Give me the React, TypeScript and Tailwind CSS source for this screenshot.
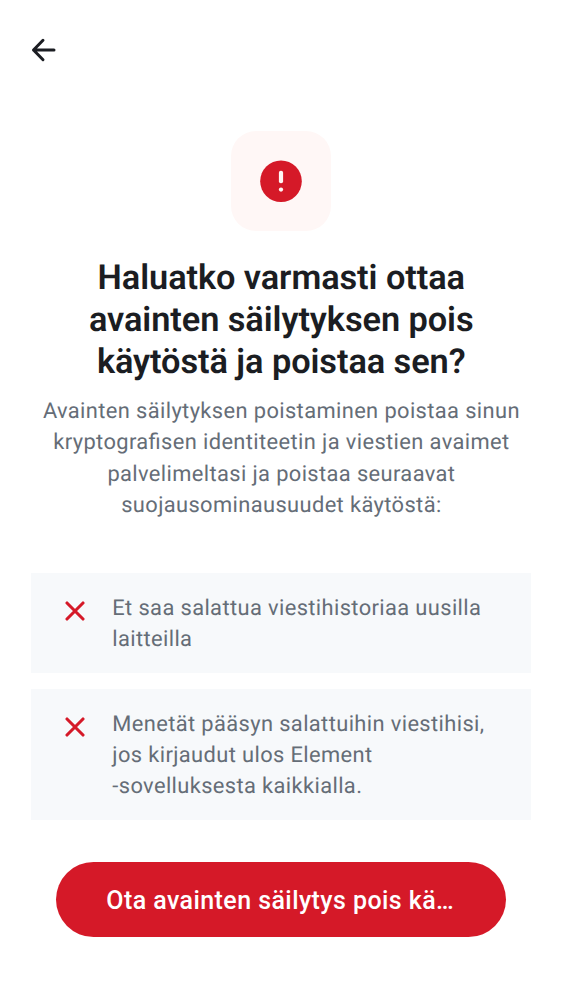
const X = () => (
  <svg className="mt-[7.9px] h-[20px] w-[20px] shrink-0" viewBox="0 0 20 20" fill="none">
    <path d="M2 2L18 18M18 2L2 18" stroke="#d51928" strokeWidth="3.1" strokeLinecap="round" />
  </svg>
);

const items = [
  ["Et saa salattua viestihistoriaa uusilla", "laitteilla"],
  ["Menetät pääsyn salattuihin viestihisi,", "jos kirjaudut ulos Element", "-sovelluksesta kaikkialla."],
];

export default function App() {
  return (
    <div className="flex h-[1000px] w-[562px] flex-col overflow-hidden bg-white font-['Roboto',sans-serif] [text-rendering:geometricPrecision]">
      <header className="h-[131px] pl-[31px] pt-[38px]">
        <svg className="h-[24px] w-[25px]" viewBox="0 0 25 24" fill="none">
          <path d="M12 2.3L2.5 12L12 21.7M2.5 12H23" stroke="#1b1d22" strokeWidth="3" strokeLinecap="round" strokeLinejoin="round" />
        </svg>
      </header>
      <div className="mx-auto flex h-[100px] w-[100px] shrink-0 items-center justify-center rounded-[25px] bg-[#fff7f6]">
        <svg className="h-[42px] w-[42px]" viewBox="0 0 42 42">
          <circle cx="21" cy="21.2" r="20.8" fill="#d51928" />
          <rect x="18.9" y="10.8" width="4.2" height="12.4" rx="1.9" fill="#fff7f6" />
          <circle cx="21" cy="29.6" r="2.15" fill="#fff7f6" />
        </svg>
      </div>
      <h1 className="mt-[26px] whitespace-nowrap pl-[0.5px] text-center text-[34.375px] font-semibold leading-[42.2px] tracking-[-0.08px] text-[#1b1d22]">
        Haluatko varmasti ottaa<br />avainten säilytyksen pois<br />käytöstä ja poistaa sen?
      </h1>
      <p className="mt-[12.4px] whitespace-nowrap pl-[0.8px] text-center text-[21.875px] leading-[31.25px] tracking-[0.385px] text-[#656d77] [font-feature-settings:'liga'_1]">
        Avainten säilytyksen poistaminen poistaa sinun<br />kryptografisen identiteetin ja viestien avaimet<br />palvelimeltasi ja poistaa seuraavat<br />suojausominausuudet käytöstä:
      </p>
      <ul className="mx-[31px] mt-[52px] flex flex-col gap-[15.75px]">
        {items.map((lines) => (
          <li key={lines[0]} className="flex gap-[27.3px] bg-[#f7f9fb] pb-[17.5px] pl-[34px] pt-[20px]">
            <X />
            <div className="whitespace-nowrap text-[21.875px] leading-[31.25px] tracking-[0.385px] text-[#656d77]">
              {lines.map((line) => <div key={line}>{line}</div>)}
            </div>
          </li>
        ))}
      </ul>
      <button className="mx-auto mt-[42.2px] h-[75px] w-[450px] shrink-0 whitespace-nowrap rounded-full bg-[#d51928] pr-[1.5px] pt-[2.5px] text-[25px] font-medium tracking-[0.42px] text-white">
        Ota avainten säilytys pois kä…
      </button>
    </div>
  );
}
